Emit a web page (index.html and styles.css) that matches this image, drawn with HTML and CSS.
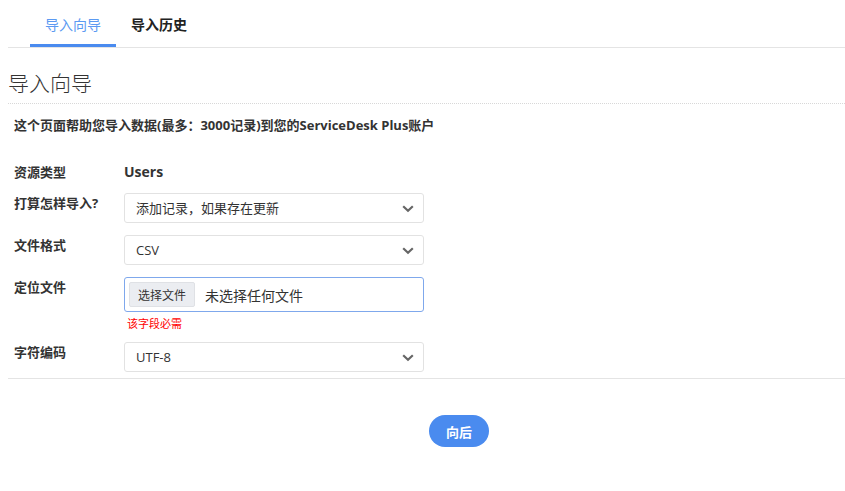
FILE: index.html
```html
<!DOCTYPE html>
<html lang="zh-CN">
<head>
  <meta charset="UTF-8" />
  <meta name="viewport" content="width=device-width, initial-scale=1.0" />
  <title>导入向导</title>
  <link rel="stylesheet" href="styles.css">
</head>
<body>
  <nav class="tabs">
    <a class="tab active" href="#wizard">导入向导</a>
    <a class="tab" href="#history">导入历史</a>
  </nav>

  <section id="wizard">
    <h2 class="page-title">导入向导</h2>
    <p class="intro">这个页面帮助您导入数据(最多：3000记录)到您的ServiceDesk Plus账户</p>

    <div class="form">
      <div class="form-row static">
        <label class="label">资源类型</label>
        <div class="field value">Users</div>
      </div>
      <div class="form-row">
        <label class="label">打算怎样导入?</label>
        <div class="field">
          <div class="select">
            <span>添加记录，如果存在更新</span>
            <svg class="chevron" width="12" height="8" viewBox="0 0 12 8"><path d="M1.2 1.3 L6 5.8 L10.8 1.3" fill="none" stroke="#666" stroke-width="2.2"/></svg>
          </div>
        </div>
      </div>
      <div class="form-row">
        <label class="label">文件格式</label>
        <div class="field">
          <div class="select">
            <span>CSV</span>
            <svg class="chevron" width="12" height="8" viewBox="0 0 12 8"><path d="M1.2 1.3 L6 5.8 L10.8 1.3" fill="none" stroke="#666" stroke-width="2.2"/></svg>
          </div>
        </div>
      </div>
      <div class="form-row">
        <label class="label">定位文件</label>
        <div class="field">
          <div class="file-input">
            <span class="file-btn">选择文件</span>
            <span class="file-name">未选择任何文件</span>
          </div>
          <div class="error">该字段必需</div>
        </div>
      </div>
      <div class="form-row">
        <label class="label">字符编码</label>
        <div class="field">
          <div class="select">
            <span>UTF-8</span>
            <svg class="chevron" width="12" height="8" viewBox="0 0 12 8"><path d="M1.2 1.3 L6 5.8 L10.8 1.3" fill="none" stroke="#666" stroke-width="2.2"/></svg>
          </div>
        </div>
      </div>
    </div>

    <div class="actions">
      <button class="next-btn">向后</button>
    </div>
  </section>
</body>
</html>
```

FILE: styles.css
```css
:root {
  --blue: #4a8bef;
  --text: #333;
  --line: #e4e4e4;
}
* {
  margin: 0;
  padding: 0;
  box-sizing: border-box;
}
body {
  font-family: 'Open Sans', 'Noto Sans CJK SC', sans-serif;
  color: var(--text);
  background: #fff;
  padding: 8px 0 0 8px;
}
.tabs {
  display: flex;
  padding-left: 22px;
  border-bottom: 1px solid var(--line);
  height: 40px;
}
.tab {
  display: block;
  padding: 6px 15px 0;
  font-size: 14px;
  font-weight: 600;
  color: #222;
  text-decoration: none;
  border-bottom: 3px solid transparent;
}
.tab.active {
  color: #5b9af2;
  font-weight: 400;
  border-bottom-color: var(--blue);
}
.page-title {
  font-size: 21px;
  font-weight: 300;
  color: #333;
  margin-top: 20px;
  line-height: 30px;
  padding-bottom: 5px;
  border-bottom: 1px dotted #d8d8d8;
}
.intro {
  font-size: 13px;
  font-weight: 700;
  padding: 11px 0 0 6px;
  line-height: 20px;
}
.form {
  padding: 27px 0 6px 6px;
  border-bottom: 1px solid var(--line);
}
.form-row {
  display: flex;
  margin-bottom: 12px;
}
.form-row:last-child {
  margin-bottom: 0;
}
.form-row.static {
  margin-bottom: 11px;
}
.label {
  width: 110px;
  font-size: 13px;
  font-weight: 700;
  padding-top: 1px;
  line-height: 18px;
}
.field {
  width: 300px;
}
.value {
  font-size: 14px;
  font-weight: 700;
  line-height: 20px;
}
.select {
  position: relative;
  height: 30px;
  border: 1px solid #e2e2e2;
  border-radius: 3px;
  padding: 0 11px;
  font-size: 13px;
  line-height: 28px;
  color: #333;
}
.chevron {
  position: absolute;
  right: 9px;
  top: 11px;
}
.file-input {
  display: flex;
  align-items: center;
  height: 35px;
  border: 1px solid #7fa8ec;
  border-radius: 3px;
  padding: 0 4px;
}
.file-btn {
  width: 66px;
  height: 25px;
  line-height: 25px;
  text-align: center;
  background: #ebedf1;
  border: 1px solid #dfe1e5;
  border-radius: 2px;
  font-size: 12px;
  color: #333;
}
.file-name {
  margin-left: 10px;
  font-size: 14px;
  color: #333;
}
.error {
  color: #ff0000;
  font-size: 11px;
  line-height: 16px;
  padding: 4px 0 0 3px;
  height: 20px;
  margin-bottom: -2px;
}
.actions {
  padding: 36px 0 0 421px;
}
.next-btn {
  width: 60px;
  height: 32px;
  border: none;
  border-radius: 16px;
  background: var(--blue);
  color: #fff;
  font-family: inherit;
  font-size: 13px;
  font-weight: 700;
  cursor: pointer;
}
```
